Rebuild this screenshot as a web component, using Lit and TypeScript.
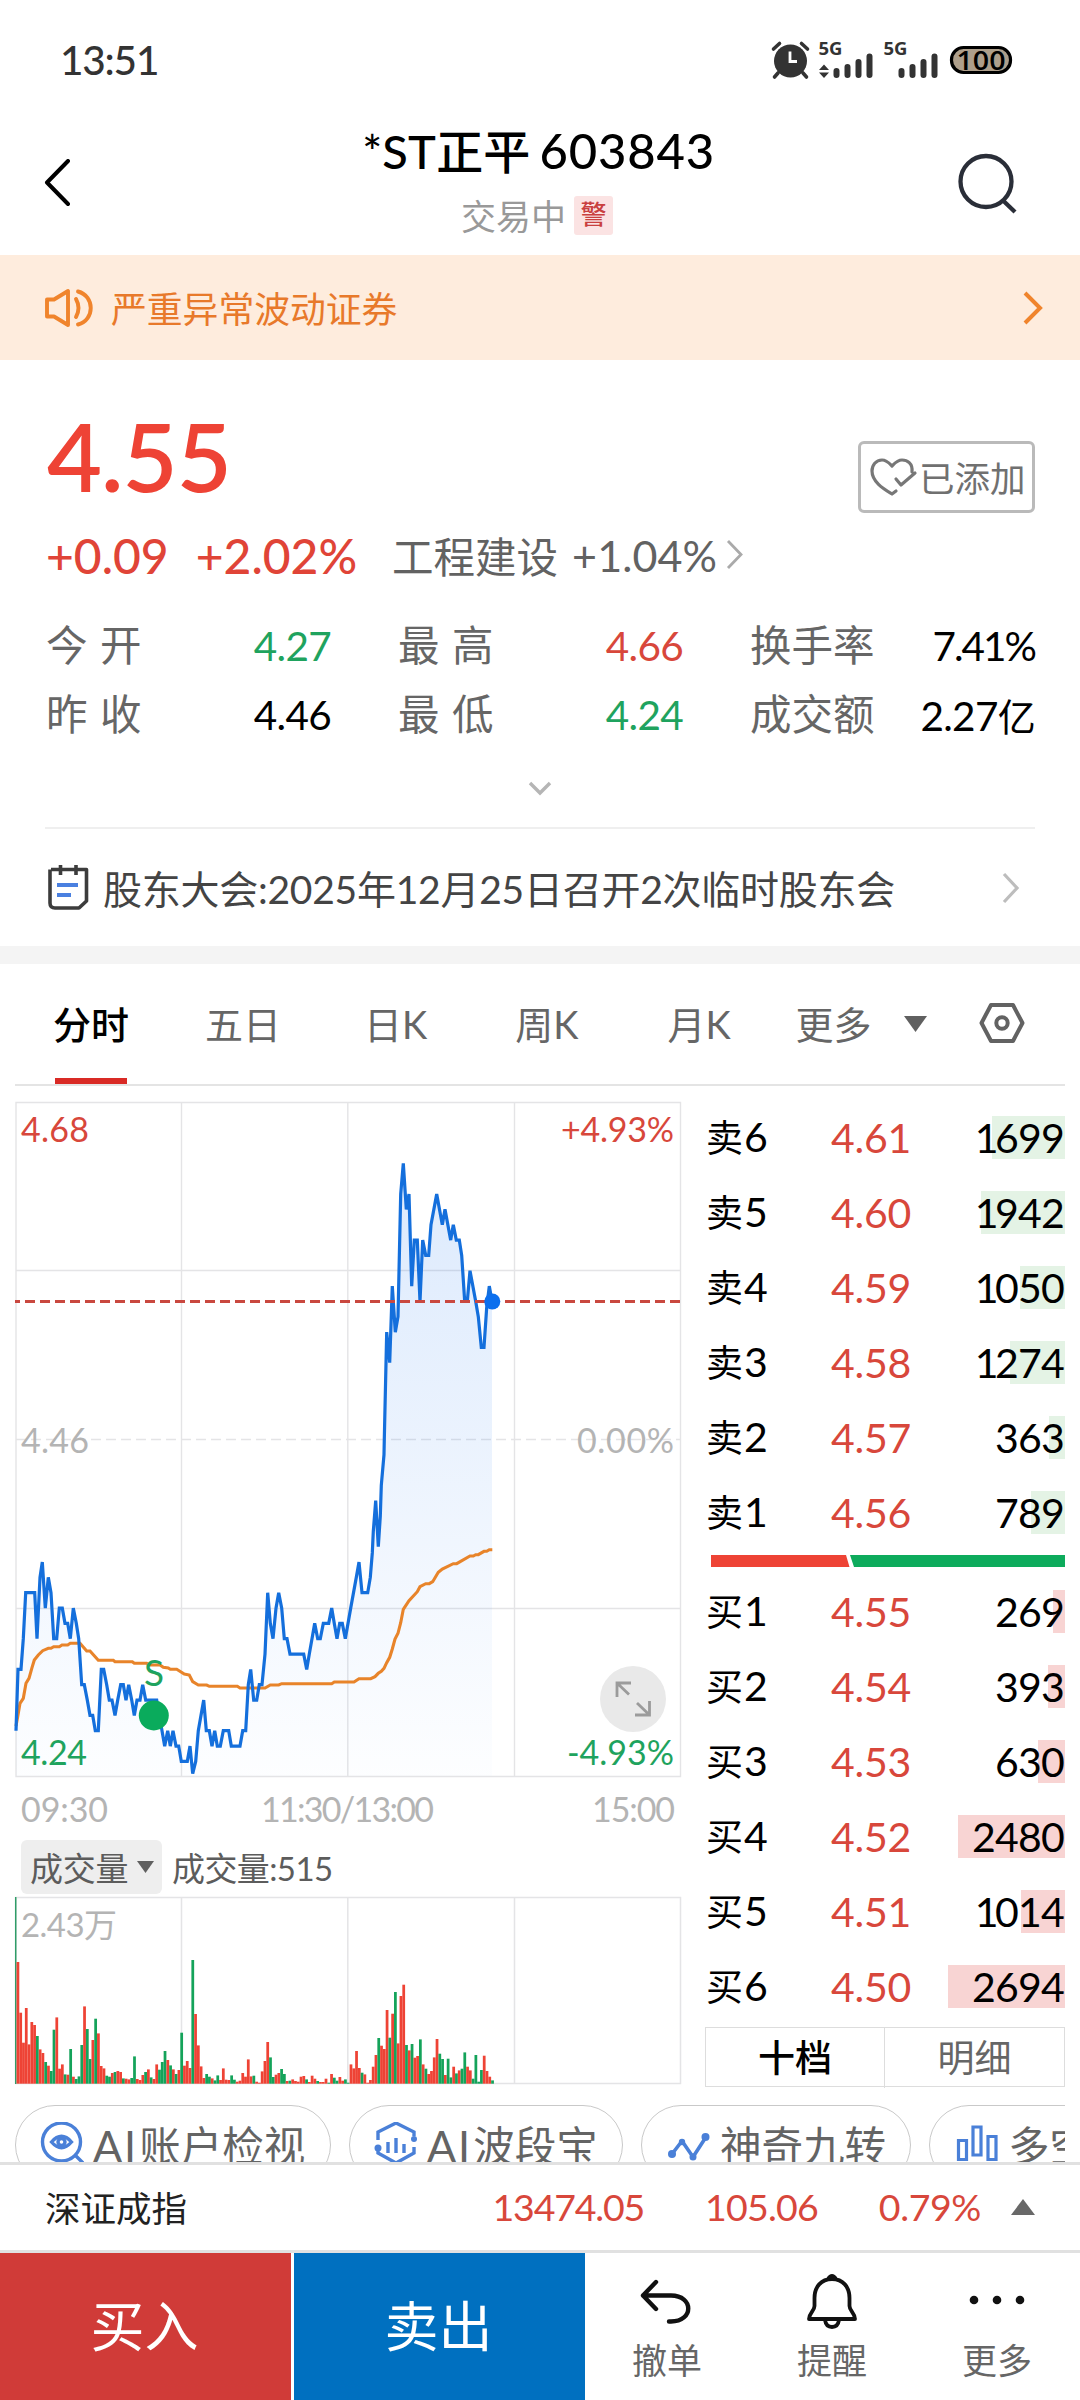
import { LitElement, html, css, svg } from "lit";
import { customElement, property } from "lit/decorators.js";

type Pt = [number, number];

/* Price trace: x in thirds of a pixel, level in ticks below the previous close. */
const PRICE: Pt[] = [
  [48,19],[54,15],[63,15],[70,13],[77,10],[104,10],[111,13],[120,9],[127,8],[136,11],[145,9],[153,10],[161,13],[170,13],
  [178,11],[187,11],[195,12],[203,12],[211,13],[220,11],[229,12],[236,13],[245,16],[253,16],[262,17],[270,18],[278,18],
  [286,19],[295,19],[304,15],[311,15],[320,16],[328,17],[336,17],[345,18],[353,17],[362,16],[370,16],[378,17],[386,16],
  [395,17],[403,18],[411,17],[420,17],[428,16],[437,17],[470,17],[478,18],[486,19],[494,20],[503,19],[511,20],[519,19],
  [528,20],[536,20],[544,21],[562,21],[570,20],[578,21.8],[587,21],[595,19],[603,18],[611,17],[619,19],[628,19],[636,20],
  [644,19],[652,20],[661,20],[670,19],[686,19],[694,20],[720,20],[728,19],[737,19],[745,16],[752,15],[761,17],[770,17],
  [778,16],[786,16],[795,14],[803,10],[811,12],[819,13],[828,11],[836,10],[845,11],[853,13],[861,13],[870,14],[911,14],
  [920,15],[928,14],[936,13],[944,12],[953,13],[961,13],[970,12],[986,12],[995,11],[1003,12],[1011,13],[1019,12],
  [1027,12],[1036,13],[1052,11],[1069,9],[1077,8],[1086,10],[1103,10],[1111,9],[1117,7.4],[1120,6],[1127,4],[1135,7],
  [1141,5],[1144,3],[1152,1],[1153,0],[1160,-7],[1169,-5],[1177,-10],[1186,-7],[1194,-8],[1202,-16],[1210,-18],
  [1219,-15],[1227,-16],[1235,-10],[1243,-13],[1252,-13],[1260,-9],[1268,-13],[1277,-12],[1286,-12],[1293,-14],
  [1310,-16],[1327,-14],[1335,-15],[1352,-13],[1360,-14],[1369,-13],[1378,-13],[1385,-12],[1394,-9],[1402,-9],
  [1410,-11],[1427,-9],[1435,-8],[1444,-6],[1452,-6],[1460,-8.6],[1468,-10],[1476,-9],
];

/* Average-price trace, both axes in thirds of a pixel. */
const AVERAGE: Pt[] = [
  [48,888],[53,860],[60,820],[70,805],[78,760],[87,745],[96,713],[103,690],[115,675],[128,662],[145,655],[153,655],
  [161,650],[178,650],[186,645],[203,645],[211,640],[240,640],[260,663],[270,663],[295,691],[340,691],[345,695],[397,695],
  [403,700],[440,700],[450,705],[480,705],[490,712],[505,714],[511,718],[530,718],[553,732],[568,735],[578,755],[595,765],
  [620,765],[628,769],[712,769],[720,774],[795,774],[811,765],[836,765],[845,761],[995,761],[1003,756],[1062,756],
  [1077,746],[1112,746],[1125,740],[1135,730],[1144,724],[1152,715],[1160,698],[1169,682],[1177,657],[1185,627],[1194,610],
  [1202,578],[1210,538],[1227,512],[1252,485],[1260,470],[1277,461],[1288,461],[1298,455],[1315,427],[1327,417],[1360,401],
  [1370,401],[1410,378],[1420,378],[1427,374],[1435,374],[1452,364],[1460,364],[1468,359],[1477,359],
];

/* Per-minute volume bars: r = up, g = down, number = top edge on a 350–911 scale. */
const VOLUME =
  "r546 r698 r788 r684 r793 r726 r735 g768 r808 r819 g846 r857 g873 g749 r712 r866 r853 g883 r884 g807 r890 g897 g889 g795 r679 g747 g837 r780 g716 r760 r858 r865 g887 g890 r879 g876 r873 r876 g895 r896 r898 g894 g829 r897 r900 r885 g876 r868 g892 r897 r853 g869 g846 g813 r840 g856 r868 g882 r870 g758 r857 r843 r864 g540 r702 r796 r859 r894 g882 g890 r895 g901 g886 r900 r865 r899 r900 g886 g899 r905 r902 r879 r890 r838 r889 g887 r905 r908 r874 r843 r786 g832 g891 r884 r879 g867 g882 r903 g902 r898 r903 r905 r890 r888 g898 r906 r887 r896 g903 r906 r906 r896 g908 r882 g893 g902 r891 r902 g898 g908 r853 r865 r813 r864 g878 r883 r908 r900 r860 r825 g774 r797 r807 r690 g773 r701 g636 r790 r648 r614 g795 r811 g792 r833 r828 g778 r853 g866 r882 r873 r832 r777 g821 g837 r885 g836 g892 r860 g880 r871 g866 g817 r860 r871 g896 g825 g905 g870 r827 r873 r890 g901".split(" ");

@customElement("price-chart")
class PriceChart extends LitElement {
  static styles = css`
    :host { display: block; }
    svg { display: block; }
    text { font-family: Lato, "Noto Sans CJK SC", sans-serif; }
    .grid { stroke: #e4e4e6; stroke-width: 1.4; fill: none; }
    .lbl { font-size: 34px; }
    .up { fill: #d8473b; }
    .down { fill: #1fa35e; }
    .mute { fill: #b4b4b4; }
  `;
  render() {
    const px = ([x, n]: Pt): string => `${(x / 3).toFixed(1)},${(1439.4 + n * 15.333).toFixed(1)}`;
    const line = PRICE.map(px).join(" ");
    const avg = AVERAGE.map(([x, y]) => `${(x / 3).toFixed(1)},${(1430 + y / 3).toFixed(1)}`).join(" ");
    return html`<svg width="690" height="738" viewBox="0 1090 690 738">
      <defs>
        <linearGradient id="fill" x1="0" y1="0" x2="0" y2="1">
          <stop offset="0" stop-color="#1a73f0" stop-opacity=".15" />
          <stop offset=".55" stop-color="#1a73f0" stop-opacity=".075" />
          <stop offset="1" stop-color="#1a73f0" stop-opacity=".01" />
        </linearGradient>
      </defs>
      <path class="grid" d="M16 1102.5H680.500V1776.500H16ZM16 1270.500H680M16 1608.500H680M181.500 1102V1776M347.800 1102V1776M514.500 1102V1776" />
      <path class="grid" d="M16 1439.500H680" stroke-dasharray="10 5" />
      <text class="lbl mute" x="21" y="1453" textLength="68">4.46</text>
      <text class="lbl mute" x="577" y="1453" textLength="97">0.00%</text>
      <polygon fill="url(#fill)" points="16,1776 ${line} 492,1776" />
      <polyline points=${avg} fill="none" stroke="#e8842a" stroke-width="3.100" />
      <polyline points=${line} fill="none" stroke="#146fdc" stroke-width="3.200" stroke-miterlimit="1.5" />
      <path d="M15 1301.500H680" stroke="#c9483f" stroke-width="3" stroke-dasharray="10 5" stroke-dashoffset="5" />
      <circle cx="492.300" cy="1301.500" r="8" fill="#0b6fee" />
      <text class="down" x="144" y="1686" font-size="37">S</text>
      <circle cx="153.800" cy="1715.500" r="15" fill="#0aab5c" />
      <circle cx="633" cy="1699" r="33" fill="#e9e9e9" />
      <path d="M617 1697V1683H631M617 1683L629 1694.500M649.500 1701V1715H635M649.500 1715L637 1703" fill="none" stroke="#9b9b9b" stroke-width="2.800" />
      <text class="lbl up" x="21" y="1141.500" textLength="68">4.68</text>
      <text class="lbl up" x="561" y="1141.500" textLength="113">+4.93%</text>
      <text class="lbl down" x="21" y="1765" textLength="66">4.24</text>
      <text class="lbl down" x="567" y="1765" textLength="107">-4.93%</text>
      <text class="lbl mute" x="21" y="1821.500" textLength="87">09:30</text>
      <text class="lbl mute" x="261" y="1821.500" textLength="173">11:30/13:00</text>
      <text class="lbl mute" x="592" y="1821.500" textLength="83">15:00</text>
    </svg>`;
  }
}

@customElement("volume-chart")
class VolumeChart extends LitElement {
  static styles = css`
    :host { display: block; }
    svg { display: block; }
    text { font-family: Lato, "Noto Sans CJK SC", sans-serif; font-size: 33px; fill: #b4b4b4; }
    .grid { stroke: #e4e4e6; stroke-width: 1.5; fill: none; }
    .r { fill: #ee4335; }
    .g { fill: #14a35a; }
  `;
  render() {
    return html`<svg width="690" height="190" viewBox="0 1896 690 190">
      <path class="grid" d="M16 1897.500H680.500V2083.500H16ZM181.500 1898V2083M347.800 1898V2083M514.500 1898V2083" />
      <text x="21" y="1936.500" textLength="96">2.43万</text>
      <path d="M15.700 1897V2084" stroke="#2f9d68" stroke-width="1.500" />
      ${VOLUME.map((b, i) => {
        const h = (911 - Number(b.slice(1))) / 3.0;
        const x = (40 + 8.06 * (i + 1)) / 2.904;
        return svg`<rect class=${b[0]} x=${x.toFixed(2)} y=${(2083.700 - h).toFixed(1)} width="2.750" height=${h.toFixed(1)} />`;
      })}
    </svg>`;
  }
}

@customElement("book-row")
class BookRow extends LitElement {
  @property() label = "";
  @property() price = "";
  @property() qty = "";
  @property({ type: Number }) depth = 0;
  @property() side = "sell";
  static styles = css`
    :host { display: block; height: 75px; }
    .row { display: grid; grid-template-columns: 92px 148px 120px; align-items: center; height: 75px; line-height: 75px;
      font-size: 41px; color: #000; }
    .label { padding-left: 1px; white-space: nowrap; }
    .cjk { font-size: 37px; margin-right: 1px; }
    .price { color: #d8473b; text-align: center; letter-spacing: -.3px; }
    .qty { position: relative; height: 75px; text-align: right; padding-right: 1px; }
    .bar { position: absolute; right: 0; top: 16px; height: 43px; }
    .sell { background: #e4f3e5; }
    .buy { background: #f8d4d3; }
    .num { position: relative; letter-spacing: -.8px; }
    .one { letter-spacing: -3.5px; }
  `;
  render() {
    const first = this.qty[0] === "1";
    return html`<div class="row">
      <span class="label"><span class="cjk">${this.label[0]}</span>${this.label.slice(1)}</span>
      <span class="price">${this.price}</span>
      <span class="qty"><span class="bar ${this.side}" style="width:${this.depth}px"></span><span class="num"><span class=${first ? "one" : ""}>${this.qty[0]}</span>${this.qty.slice(1)}</span></span>
    </div>`;
  }
}

const SELL: [string, string, string, number][] = [
  ["卖6", "4.61", "1699", 73], ["卖5", "4.60", "1942", 84], ["卖4", "4.59", "1050", 45],
  ["卖3", "4.58", "1274", 55], ["卖2", "4.57", "363", 16], ["卖1", "4.56", "789", 34],
];
const BUY: [string, string, string, number][] = [
  ["买1", "4.55", "269", 12], ["买2", "4.54", "393", 17], ["买3", "4.53", "630", 27],
  ["买4", "4.52", "2480", 107], ["买5", "4.51", "1014", 44], ["买6", "4.50", "2694", 117],
];

@customElement("app-root")
class AppRoot extends LitElement {
  static styles = css`
    :host { display: block; width: 1080px; height: 2400px; background: #fff; overflow: hidden; color: #000;
      font-family: Lato, "Noto Sans CJK SC", sans-serif; }
    * { box-sizing: border-box; }
    svg { display: block; flex: none; }
    span, div { white-space: nowrap; }
    .page { display: flex; flex-direction: column; height: 2400px; }
    .page > div { flex-shrink: 0; }
    .status { height: 120px; padding: 0 63px 0 60px; display: flex; justify-content: space-between; align-items: center; }
    .time { font-size: 40.500px; color: #333; letter-spacing: -1.200px; font-weight: 500; padding-bottom: 2px; }
    .status svg { margin-right: 4px; }
    .header { height: 135px; padding: 0 61px 8px 42px; display: flex; justify-content: space-between; align-items: center; }
    .titles { display: flex; flex-direction: column; align-items: center; margin-left: 46px; }
    .title { font-size: 47px; line-height: 64px; font-weight: 500; margin-top: -6px; letter-spacing: .2px; }
    .code { font-size: 49px; margin-left: 9px; letter-spacing: .8px; }
    .sub { display: flex; align-items: center; gap: 8px; font-size: 35px; line-height: 56px; color: #999; margin-top: 5px; margin-right: 3px; }
    .warn { width: 39px; height: 39px; line-height: 37px; border-radius: 3px; background: #fbe3e3; color: #c9403f;
      font-size: 26px; text-align: center; font-weight: 500; }
    .notice { height: 105px; background: #feecdd; color: #e8792a; display: flex; align-items: center; padding: 0 37px 0 44px; font-size: 35.800px; }
    .notice .txt { margin-left: 16px; flex: 1; padding-bottom: 2px; }
    .quote { height: 586px; padding: 0 45px; display: flex; flex-direction: column; }
    .top { height: 153px; display: flex; justify-content: space-between; align-items: flex-end; }
    .last { font-size: 95px; line-height: 95px; color: #ee4335; font-weight: 600; margin-bottom: 10px; letter-spacing: -1px; margin-left: 2px; }
    .added { width: 177px; height: 72px; border: 3px solid #bababa; border-radius: 6px; display: flex; align-items: center;
      font-size: 35.500px; color: #707070; padding: 0 0 1px 8px; }
    .chg { height: 84px; display: flex; align-items: center; font-size: 48px; color: #e04437; padding-left: 1px; font-weight: 500; }
    .chg .pct { margin-left: 27px; letter-spacing: 0; }
    .chg .ind { margin-left: 35px; font-size: 41.500px; color: #626262; font-weight: 400; }
    .chg .indp { margin-left: 14px; font-size: 43px; color: #626262; letter-spacing: .1px; font-weight: 400; }
    .chg svg { margin-left: 9px; }
    .stats { display: grid; grid-template-columns: 286px 66px 286px 66px 286px; height: 138px; grid-template-rows: 69px 69px; margin-top: 14px; }
    .cell { display: flex; justify-content: space-between; align-items: center; font-size: 40.500px; letter-spacing: -.7px; }
    .cell .k { color: #666; font-size: 41.500px; letter-spacing: 0; padding-bottom: 5px; margin-left: 1px; }
    .cell .gap { word-spacing: 2px; }
    .cell .tight { letter-spacing: -2px; margin-right: 0; }
    .u { font-size: 38px; }
    .g { color: #1fa35e; }
    .r { color: #d8473b; }
    .down { height: 78px; display: flex; justify-content: center; padding-top: 32px; }
    .news { flex: 1; border-top: 2px solid #efefef; display: flex; align-items: center; font-size: 39px; color: #444; padding: 0 15px 0 2px; }
    .news .txt { margin-left: 13px; flex: 1; letter-spacing: -.25px; padding-bottom: 2px; }
    .band { height: 18px; background: #f4f4f4; }
    .tabs { height: 122px; margin: 0 15px; border-bottom: 2px solid #e4e4e4; display: flex; align-items: stretch; font-size: 38px; color: #666; }
    .tab { line-height: 121px; position: relative; }
    .t1 { margin-left: 38px; color: #000; font-weight: 500; }
    .t1::after { content: ""; position: absolute; left: 2px; bottom: 0; width: 72px; height: 6px; background: #d92a25; }
    .t2 { margin-left: 76px; } .t3 { margin-left: 83px; } .t4 { margin-left: 88px; } .t5 { margin-left: 89px; } .t6 { margin-left: 65px; }
    .tabs svg { margin-top: 36px; margin-left: 31px; }
    .tabs .hex { margin-left: 49px; }
    .main { display: flex; height: 1004px; padding-top: 4px; }
    .left { width: 690px; }
    .volhead { height: 68px; display: flex; align-items: center; padding: 10px 0 0 21px; font-size: 33px; color: #5c5c5c; }
    .chip { width: 141px; height: 54px; background: #eee; border-radius: 6px; display: flex; align-items: center; gap: 9px; padding-left: 9px; letter-spacing: -.3px; }
    .volval { margin-left: 10px; letter-spacing: -.6px; }
    .book { margin-left: 15px; width: 360px; padding-top: 9px; }
    .ratio { height: 24px; padding: 6px 0 0 6px; }
    .seg { margin-top: 4px; height: 60px; border: 1px solid #ddd; display: grid; grid-template-columns: 1fr 1fr; line-height: 60px; text-align: center; font-size: 37px; color: #666; }
    .seg .on { color: #000; font-weight: 500; border-right: 1px solid #ddd; }
    .pills { height: 72px; margin: 0 15px; padding-top: 15px; display: flex; overflow: hidden; }
    .pill { flex: none; height: 80px; border: 1px solid #c9c9c9; border-radius: 40px; display: flex; align-items: center; font-size: 41.500px; color: #646464; margin-right: 18px; }
    .p1 { width: 316px; padding-left: 24px; } .p2 { width: 274px; padding-left: 24px; } .p3 { width: 270px; padding-left: 25px; } .p4 { width: 300px; padding-left: 25px; }
    .pill .t { margin-left: 9px; padding-bottom: 3px; }
    .pill .ai { font-size: 43px; letter-spacing: 2px; margin-right: 1px; }
    .index { height: 91px; border-top: 3px solid #e1e1e1; border-bottom: 3px solid #e1e1e1; display: flex; align-items: center; padding: 0 45px 2px; }
    .index .nm { font-size: 35.500px; color: #222; flex: 1; padding-bottom: 1px; }
    .index .v { font-size: 37.500px; color: #d8473b; letter-spacing: -1.200px; }
    .index .v2 { margin-left: 61px; letter-spacing: -.8px; } .index .v3 { margin-left: 61px; letter-spacing: -.4px; }
    .index svg { margin-left: 30px; }
    .actions { height: 147px; display: flex; }
    .big { width: 291px; line-height: 147px; text-align: center; color: #fff; font-size: 54px; padding-right: 2px; }
    .buy { background: #d03b38; } .sell { background: #0070c0; margin-left: 3px; }
    .acts { flex: 1; display: flex; justify-content: space-around; }
    .act { width: 165px; display: flex; flex-direction: column; align-items: center; padding: 16px 1px 0 0; font-size: 35px; color: #666; }
    .act span { line-height: 50px; }
  `;

  private cell(k: string, v: unknown, c = "") {
    return html`<div class="cell"><span class="k gap">${k}</span><span class=${c}>${v}</span></div>`;
  }

  render() {
    return html`<div class="page">
      <div class="status">
        <span class="time">13:51</span>
        <svg width="248" height="60" viewBox="765 30 248 60">
          <g fill="#333"><circle cx="790.500" cy="61" r="16.500" /><path d="M778 73l-3.500 4M803 73l3.500 4M773.500 49l6-5.500M807.500 49l-6-5.500" stroke="#333" stroke-width="3.600" stroke-linecap="round" />
          <path d="M790 51.500V61.500H797" fill="none" stroke="#fff" stroke-width="2.800" />
          <path d="M819 70l5-5.500 5 5.500zM819 72.500l5 5.500 5-5.500z" />
          <g stroke="#333" stroke-width="6" stroke-linecap="round"><path d="M836.500 71v4M847.500 67v8M858.500 62v13M869.500 56.500V75M901.500 71v4M912.500 67v8M923.500 62v13M934.500 56.500V75" /></g>
          <text x="818.500" y="55" font-family="Noto Sans" font-weight="700" font-size="18.500" textLength="24">5G</text>
          <text x="883.500" y="55" font-family="Noto Sans" font-weight="700" font-size="18.500" textLength="24">5G</text></g>
          <rect x="951.500" y="47.500" width="59" height="25" rx="12" fill="#ae9f8b" stroke="#000" stroke-width="3.200" />
          <text x="956.500" y="69.700" font-family="Open Sans" font-weight="600" font-size="27.500" textLength="49" lengthAdjust="spacingAndGlyphs">100</text>
        </svg>
      </div>
      <div class="header">
        <svg width="32" height="50" viewBox="0 0 32 50" fill="none" stroke="#000" stroke-width="4" stroke-linecap="round" stroke-linejoin="round"><path d="M26 3L5 24.500L26 46" transform="translate(0,-1)" /></svg>
        <div class="titles">
          <div class="title">*ST正平<span class="code">603843</span></div>
          <div class="sub"><span>交易中</span><span class="warn">警</span></div>
        </div>
        <svg width="62" height="62" viewBox="0 0 62 62" fill="none" stroke="#2a2e38" stroke-width="4.300"><circle cx="29" cy="28.500" r="25.500" /><path d="M46 47.500L58 59" /></svg>
      </div>
      <div class="notice">
        <svg width="51" height="40" viewBox="0 0 51 40" fill="none" stroke="#f0842c" stroke-width="3.900" stroke-linejoin="round"><path d="M3 11.500H10L24 3V37L10 28.500H3Z" /><path d="M32 11Q37 20 32 29M34 3.500C51 8 51 32 34 36.500" stroke-linecap="round" /></svg>
        <span class="txt">严重异常波动证券</span>
        <svg width="20" height="34" viewBox="0 0 20 34" fill="none" stroke="#f0842c" stroke-width="4"><path d="M2 2L17 17L2 32" /></svg>
      </div>
      <div class="quote">
        <div class="top">
          <span class="last">4.55</span>
          <span class="added"><svg width="50" height="40" viewBox="0 0 50 40" fill="none" stroke="#777" stroke-width="3.200" stroke-linejoin="round" stroke-linecap="round"><path d="M43 15C44 6 38 3 33 3C28 3 25 7 23 9C21 7 18 3 13 3C7 3 3 8 3 14C3 25 15 32 23 37L27 34M27 22L32 28L46 16" /></svg>已添加</span>
        </div>
        <div class="chg">
          <span>+0.09</span><span class="pct">+2.02%</span><span class="ind">工程建设</span><span class="indp">+1.04%</span>
          <svg width="18" height="32" viewBox="0 0 18 32" fill="none" stroke="#aaa" stroke-width="2.800"><path d="M2 2L15 15.500L2 29" /></svg>
        </div>
        <div class="stats">
          ${this.cell("今 开", "4.27", "g")}<i></i>${this.cell("最 高", "4.66", "r")}<i></i>${this.cell("换手率", "7.41%", "tight")}
          ${this.cell("昨 收", "4.46")}<i></i>${this.cell("最 低", "4.24", "g")}<i></i>${this.cell("成交额", html`2.27<span class="u">亿</span>`)}
        </div>
        <div class="down"><svg width="24" height="16" viewBox="0 0 24 16" fill="none" stroke="#b5b5b5" stroke-width="3.400"><path d="M2 2L12 12L22 2" /></svg></div>
        <div class="news">
          <svg width="43" height="48" viewBox="0 0 43 48" fill="none" stroke="#3c3c3c" stroke-width="3.600"><path d="M4 5.500H39.500V37L32 44H8Q3 44 3 39V5.500M13.500 1V11M29 1V11" stroke-linejoin="round" /><path d="M10 21H31M10 31H24" stroke="#4a80e0" stroke-width="4" /></svg>
          <span class="txt">股东大会:2025年12月25日召开2次临时股东会</span>
          <svg width="18" height="32" viewBox="0 0 18 32" fill="none" stroke="#bdbdbd" stroke-width="3.200"><path d="M2 2L15 16L2 30" /></svg>
        </div>
      </div>
      <div class="band"></div>
      <div class="tabs">
        <span class="tab t1">分时</span><span class="tab t2">五日</span><span class="tab t3">日K</span><span class="tab t4">周K</span><span class="tab t5">月K</span><span class="tab t6">更多</span>
        <svg width="25" height="46" viewBox="0 0 25 46"><path d="M1 16H24L12.500 32Z" fill="#606060" /></svg>
        <svg class="hex" width="50" height="46" viewBox="0 0 50 46" fill="none" stroke="#626262" stroke-width="4" stroke-linejoin="round"><path d="M14 5H36L45.500 23L36 41H14L4.500 23Z" /><circle cx="25" cy="23" r="5.700" /></svg>
      </div>
      <div class="main">
        <div class="left">
          <price-chart></price-chart>
          <div class="volhead">
            <span class="chip">成交量<svg width="18" height="12" viewBox="0 0 18 12"><path d="M0 0H17L8.500 12Z" fill="#606060" /></svg></span>
            <span class="volval">成交量:515</span>
          </div>
          <volume-chart></volume-chart>
        </div>
        <div class="book">
          ${SELL.map(([l, p, q, d]) => html`<book-row label=${l} price=${p} qty=${q} depth=${d} side="sell"></book-row>`)}
          <div class="ratio"><svg width="354" height="12" viewBox="0 0 354 12"><path d="M0 0H135L138.500 12H0Z" fill="#ee4335" /><path d="M139 0H354V12H143Z" fill="#0dab5c" /></svg></div>
          ${BUY.map(([l, p, q, d]) => html`<book-row label=${l} price=${p} qty=${q} depth=${d} side="buy"></book-row>`)}
          <div class="seg"><span class="on">十档</span><span>明细</span></div>
        </div>
      </div>
      <div class="pills">
        <div class="pill p1"><svg width="44" height="46" viewBox="0 0 44 46" fill="none" stroke="#4a80d8" stroke-width="3.400"><circle cx="21.500" cy="20" r="19" /><path d="M36 34L43 41M11.500 20Q21.500 8.500 31.500 20Q21.500 31.500 11.500 20Z" /><circle cx="21.500" cy="20" r="3.500" /></svg><span class="t"><span class="ai">AI</span>账户检视</span></div>
        <div class="pill p2"><svg width="44" height="46" viewBox="0 0 44 46" fill="none" stroke="#4a80d8" stroke-width="3.400"><g transform="translate(0,-2)"><path d="M4 20V12L22 3L40 12V16M40 27V33L22 43L4 33V30" /><path d="M14 22V33M22 18V33M30 24V33" /><circle cx="40" cy="19" r="3" fill="#4a80d8" stroke="none" /><circle cx="4" cy="28" r="3.500" fill="#4a80d8" stroke="none" /></g></svg><span class="t"><span class="ai">AI</span>波段宝</span></div>
        <div class="pill p3"><svg width="44" height="46" viewBox="0 0 44 46" fill="none" stroke="#4a80d8" stroke-width="3.600" stroke-linejoin="round"><path d="M5 32L15 19L26 35L39 15" /><g fill="#4a80d8" stroke="none"><circle cx="5" cy="32" r="4" /><circle cx="15" cy="20" r="3.200" /><circle cx="26" cy="35" r="3.500" /><circle cx="38.500" cy="15" r="4" /></g></svg><span class="t">神奇九转</span></div>
        <div class="pill p4"><svg width="44" height="46" viewBox="0 0 44 46" fill="none" stroke="#4a80d8" stroke-width="3.200"><path d="M3.500 18.500H11.500V37.500H3.500ZM18 5H26V33H18ZM33 14.500H41V37.500H33Z" /></svg><span class="t">多空资金</span></div>
      </div>
      <div class="index">
        <span class="nm">深证成指</span><span class="v">13474.05</span><span class="v v2">105.06</span><span class="v v3">0.79%</span>
        <svg width="24" height="16" viewBox="0 0 24 16"><path d="M0 16H24L12 0Z" fill="#686868" /></svg>
      </div>
      <div class="actions">
        <div class="big buy">买入</div><div class="big sell">卖出</div>
        <div class="acts">
          <div class="act"><svg width="60" height="66" viewBox="0 0 60 66" fill="none" stroke="#111" stroke-width="4.400" stroke-linecap="round" stroke-linejoin="round"><path d="M19 14L6 27.500L19 41M6 27.500H34C57 27.500 57 53.500 34 53.500H32" transform="translate(0,-1)" /></svg><span>撤单</span></div>
          <div class="act"><svg width="60" height="66" viewBox="0 0 60 66" fill="none" stroke="#111" stroke-width="3.800" stroke-linejoin="round"><path d="M30 10C19 10 12.500 18 12.500 29V37C12.500 42 7 44 7 50H53C53 44 47.500 42 47.500 37V29C47.500 18 41 10 30 10ZM26 10Q30 4 34 10M23 51Q24 58 30 58Q36 58 37 51" /></svg><span>提醒</span></div>
          <div class="act"><svg width="60" height="66" viewBox="0 0 60 66" fill="#111"><circle cx="7" cy="31" r="4.300" /><circle cx="30" cy="31" r="4.300" /><circle cx="53" cy="31" r="4.300" /></svg><span>更多</span></div>
        </div>
      </div>
    </div>`;
  }
}
